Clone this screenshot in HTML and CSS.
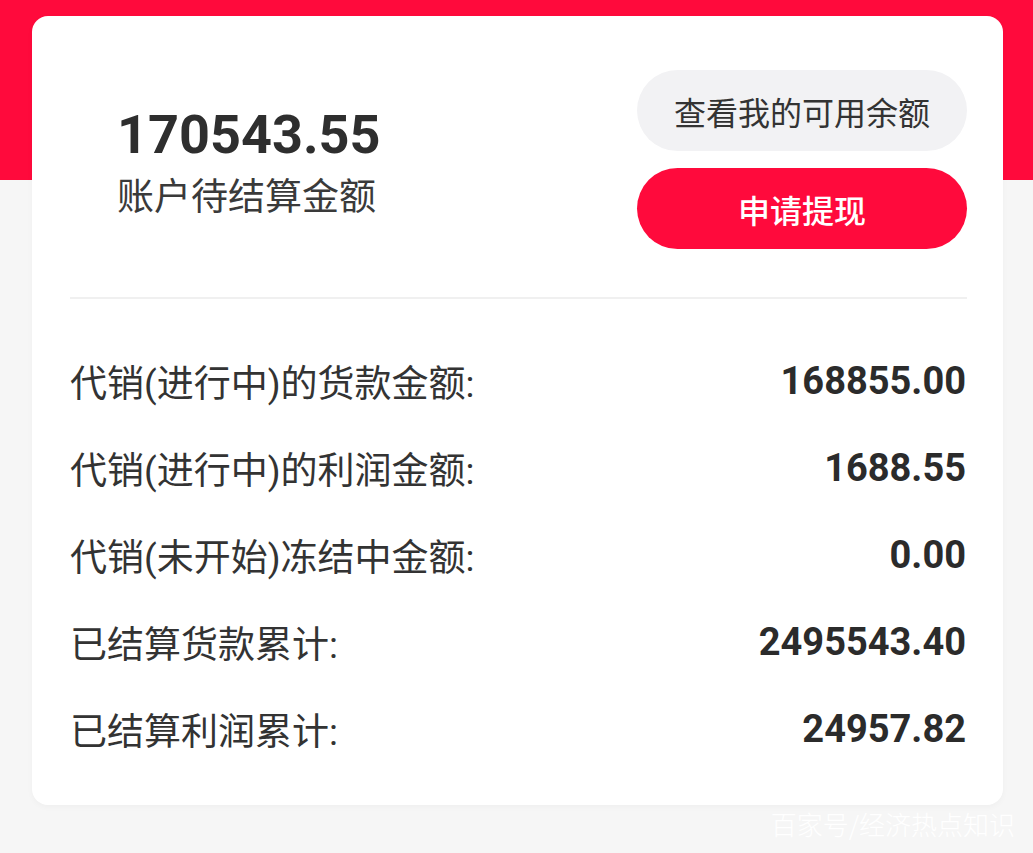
FILE: index.html
```html
<!DOCTYPE html>
<html lang="zh-CN">
<head>
  <meta charset="UTF-8">
  <meta name="viewport" content="width=device-width, initial-scale=1.0">
  <title>账户待结算金额</title>
  <link rel="stylesheet" href="styles.css">
</head>
<body>
  <div class="card">
    <div class="summary">
      <div class="pending">
        <div class="pending-amount">170543.55</div>
        <div class="pending-label">账户待结算金额</div>
      </div>
      <div class="actions">
        <button class="btn btn-gray">查看我的可用余额</button>
        <button class="btn btn-red">申请提现</button>
      </div>
    </div>
    <div class="details">
      <div class="row">
        <span class="row-label">代销(进行中)的货款金额:</span>
        <span class="row-value">168855.00</span>
      </div>
      <div class="row">
        <span class="row-label">代销(进行中)的利润金额:</span>
        <span class="row-value">1688.55</span>
      </div>
      <div class="row">
        <span class="row-label">代销(未开始)冻结中金额:</span>
        <span class="row-value">0.00</span>
      </div>
      <div class="row">
        <span class="row-label">已结算货款累计:</span>
        <span class="row-value">2495543.40</span>
      </div>
      <div class="row">
        <span class="row-label">已结算利润累计:</span>
        <span class="row-value">24957.82</span>
      </div>
    </div>
  </div>
  <div class="watermark">百家号/经济热点知识</div>
</body>
</html>
```

FILE: styles.css
```css
body {
  margin: 0;
  font-family: Roboto, "Noto Sans CJK SC", sans-serif;
  color: #333;
  background: linear-gradient(#ff0a3c 0, #ff0a3c 180px, #f6f6f6 180px);
  min-height: 853px;
  overflow: hidden;
}

.card {
  margin: 16px 30px 0 32px;
  padding: 0 36px 0 38px;
  background: #fff;
  border-radius: 16px;
  box-shadow: 0 2px 6px rgba(0, 0, 0, 0.03);
}

.summary {
  display: flex;
  justify-content: space-between;
  align-items: center;
  padding: 54px 0 48px 0;
  border-bottom: 2px solid #f0f0f0;
}

.pending {
  padding-left: 47px;
  padding-top: 8px;
}

.pending-amount {
  font-size: 54px;
  font-weight: bold;
  line-height: 60px;
  color: #2e2e2e;
}

.pending-label {
  font-size: 37px;
  line-height: 50px;
  margin-top: 8px;
  color: #3a3a3a;
}

.actions {
  display: flex;
  flex-direction: column;
  gap: 17px;
}

.btn {
  width: 330px;
  height: 81px;
  border: none;
  border-radius: 41px;
  font-family: Roboto, "Noto Sans CJK SC", sans-serif;
  font-size: 32px;
  cursor: pointer;
}

.btn-gray {
  background: #f2f2f4;
  color: #333;
}

.btn-red {
  background: #ff0a3c;
  color: #fff;
  font-weight: 500;
}

.details {
  padding: 38px 0 33px 0;
}

.row {
  display: flex;
  justify-content: space-between;
  align-items: center;
  height: 87px;
  padding-right: 1px;
}

.row-label {
  font-size: 37px;
  color: #333;
}

.row-value {
  font-size: 38px;
  font-weight: bold;
  color: #2b2b2b;
}

.watermark {
  text-align: right;
  padding: 2px 18px 0 0;
  font-size: 26px;
  line-height: 34px;
  color: #fff;
  font-family: "Noto Sans CJK SC", sans-serif;
  font-weight: 300;
}
```
